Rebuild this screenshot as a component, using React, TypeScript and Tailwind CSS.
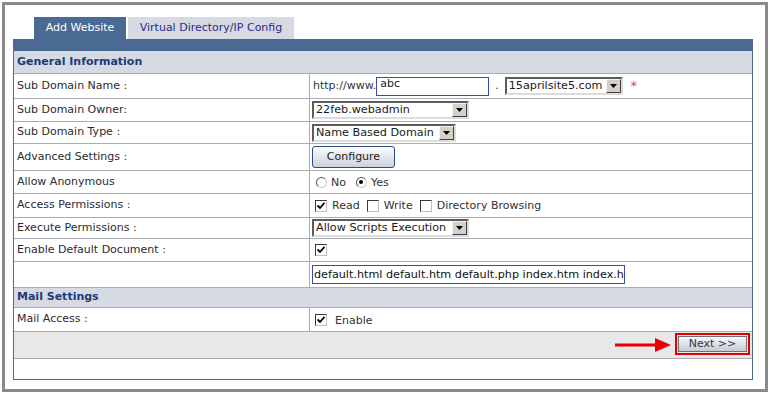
import type { ReactNode } from 'react'

function Row({ label, h, children }: { label?: string; h: string; children?: ReactNode }) {
  return (
    <div className={`flex border-b border-[#a9adb3] ${h}`}>
      <div className="w-[296px] shrink-0 border-r border-[#a9adb3] pl-[3px] flex items-center text-[#2b2b33]">
        {label}
      </div>
      <div className="flex-1 pl-[2px] flex items-center">{children}</div>
    </div>
  )
}

function SectionHead({ title, h }: { title: string; h: string }) {
  return (
    <div className={`${h} bg-[#d6dbe3] border-b border-[#a9adb3] pl-[3px] flex items-center font-bold text-[#1d3a78]`}>
      {title}
    </div>
  )
}

function Select({ w, text }: { w: string; text: string }) {
  return (
    <div className={`${w} h-[18px] flex items-center bg-white border-2 border-t-[#5c5c5c] border-l-[#5c5c5c] border-r-[#dcdcdc] border-b-[#dcdcdc]`}>
      <span className="flex-1 pl-[2px] text-[11.2px] text-[#1a1a1a] whitespace-nowrap overflow-hidden leading-none">{text}</span>
      <span className="w-[15px] h-[14px] bg-[#d4d0c8] border border-t-[#f4f4f4] border-l-[#f4f4f4] border-r-[#404040] border-b-[#404040] flex items-center justify-center">
        <svg width="7" height="4" viewBox="0 0 7 4">
          <path d="M0 0h7L3.5 4z" fill="#000" />
        </svg>
      </span>
    </div>
  )
}

function Check({ on }: { on?: boolean }) {
  return (
    <span className="w-[12px] h-[12px] bg-white border border-t-[#3a3a3a] border-l-[#3a3a3a] border-r-[#bdbdbd] border-b-[#bdbdbd] flex items-center justify-center">
      {on && (
        <svg width="8" height="8" viewBox="0 0 8 8">
          <path d="M0.5 3.5 L3 6 L7.5 0.8" fill="none" stroke="#000" strokeWidth="1.8" />
        </svg>
      )}
    </span>
  )
}

function Radio({ on }: { on?: boolean }) {
  return (
    <span className="w-[11px] h-[11px] rounded-full bg-white border border-t-[#555] border-l-[#555] border-r-[#ccc] border-b-[#ccc] flex items-center justify-center">
      {on && <span className="w-[4px] h-[4px] rounded-full bg-black" />}
    </span>
  )
}

export default function App() {
  return (
    <div className="w-[770px] h-[394px] bg-white p-[2px] font-['DejaVu_Sans',Verdana,sans-serif] text-[11px]">
      <div className="h-[390px] border-[3px] border-[#8a8a8a] pt-[12px] pl-[8px]">
        <div className="flex ml-[21px] gap-[2px] h-[22px]">
          <div className="w-[92px] bg-[#4a6a94] text-white flex items-center justify-center">Add Website</div>
          <div className="w-[166px] bg-[#d6dbe3] text-[#2a2a8c] flex items-center justify-center">Virtual Directory/IP Config</div>
        </div>
        <div className="w-[740px] border-x border-b border-[#4a6a94]">
          <div className="h-[12px] bg-[#4a6a94] -mx-px" />
          <SectionHead title="General Information" h="h-[23px]" />
          <Row label="Sub Domain Name :" h="h-[25px]">
            <span className="ml-[1px] text-[#333]">http://www.</span>
            <div className="w-[113px] h-[19px] border border-[#3b4ca0] bg-white pl-[3px] text-[11px] leading-[12px] text-[#222]">abc</div>
            <span className="mx-[6px] text-[#333]">.</span>
            <Select w="w-[118px]" text="15aprilsite5.com" />
            <span className="ml-[8px] text-[#e23a3a] text-[12px]">*</span>
          </Row>
          <Row label="Sub Domain Owner:" h="h-[23px]">
            <Select w="w-[157px]" text="22feb.webadmin" />
          </Row>
          <Row label="Sub Domain Type :" h="h-[22px]">
            <Select w="w-[144px]" text="Name Based Domain" />
          </Row>
          <Row label="Advanced Settings :" h="h-[27px]">
            <div className="w-[83px] h-[22px] rounded-[3px] border border-[#2c4a84] bg-gradient-to-b from-[#fbfbfb] to-[#cdd3dc] flex items-center justify-center text-[#222]">
              Configure
            </div>
          </Row>
          <Row label="Allow Anonymous" h="h-[23px]">
            <div className="flex items-center ml-[4px]">
              <Radio />
              <span className="ml-[4px] mt-[3px] text-[#333]">No</span>
              <span className="ml-[10px]"><Radio on /></span>
              <span className="ml-[4px] mt-[3px] text-[#333]">Yes</span>
            </div>
          </Row>
          <Row label="Access Permissions :" h="h-[24px]">
            <div className="flex items-center ml-[3px] text-[#333]">
              <Check on />
              <span className="ml-[5px] mt-[2px]">Read</span>
              <span className="ml-[7px]"><Check /></span>
              <span className="ml-[5px] mt-[2px]">Write</span>
              <span className="ml-[7px]"><Check /></span>
              <span className="ml-[5px] mt-[2px]">Directory Browsing</span>
            </div>
          </Row>
          <Row label="Execute Permissions :" h="h-[21px]">
            <Select w="w-[157px]" text="Allow Scripts Execution" />
          </Row>
          <Row label="Enable Default Document :" h="h-[23px]">
            <span className="ml-[3px]"><Check on /></span>
          </Row>
          <Row h="h-[26px]">
            <div className="w-[313px] h-[19px] border border-[#3b4ca0] bg-white pl-[1px] text-[11.2px] leading-[17px] text-[#111] whitespace-nowrap overflow-hidden">
              default.html default.htm default.php index.htm index.html
            </div>
          </Row>
          <SectionHead title="Mail Settings" h="h-[20px]" />
          <Row label="Mail Access :" h="h-[24px]">
            <span className="ml-[3px]"><Check on /></span>
            <span className="ml-[8px] mt-[3px] text-[#333]">Enable</span>
          </Row>
          <div className="h-[27px] bg-[#e8e8e8] border-b border-[#a9adb3] flex items-start justify-end pt-[1px] pr-[2px]">
            <svg width="56" height="16" viewBox="0 0 56 16" className="mt-[4px] mr-[4px]">
              <path d="M0 8h42" stroke="#e80000" strokeWidth="3" />
              <path d="M40 1 L56 8 L40 15z" fill="#e80000" />
            </svg>
            <div className="w-[75px] h-[22px] border-2 border-[#e00000] p-px">
              <div className="h-full border border-[#6a6f78] bg-gradient-to-b from-[#f7f8fa] to-[#c5cbd4] flex items-center justify-center text-[#333]">
                Next &gt;&gt;
              </div>
            </div>
          </div>
          <div className="h-[20px] bg-white" />
        </div>
      </div>
    </div>
  )
}
